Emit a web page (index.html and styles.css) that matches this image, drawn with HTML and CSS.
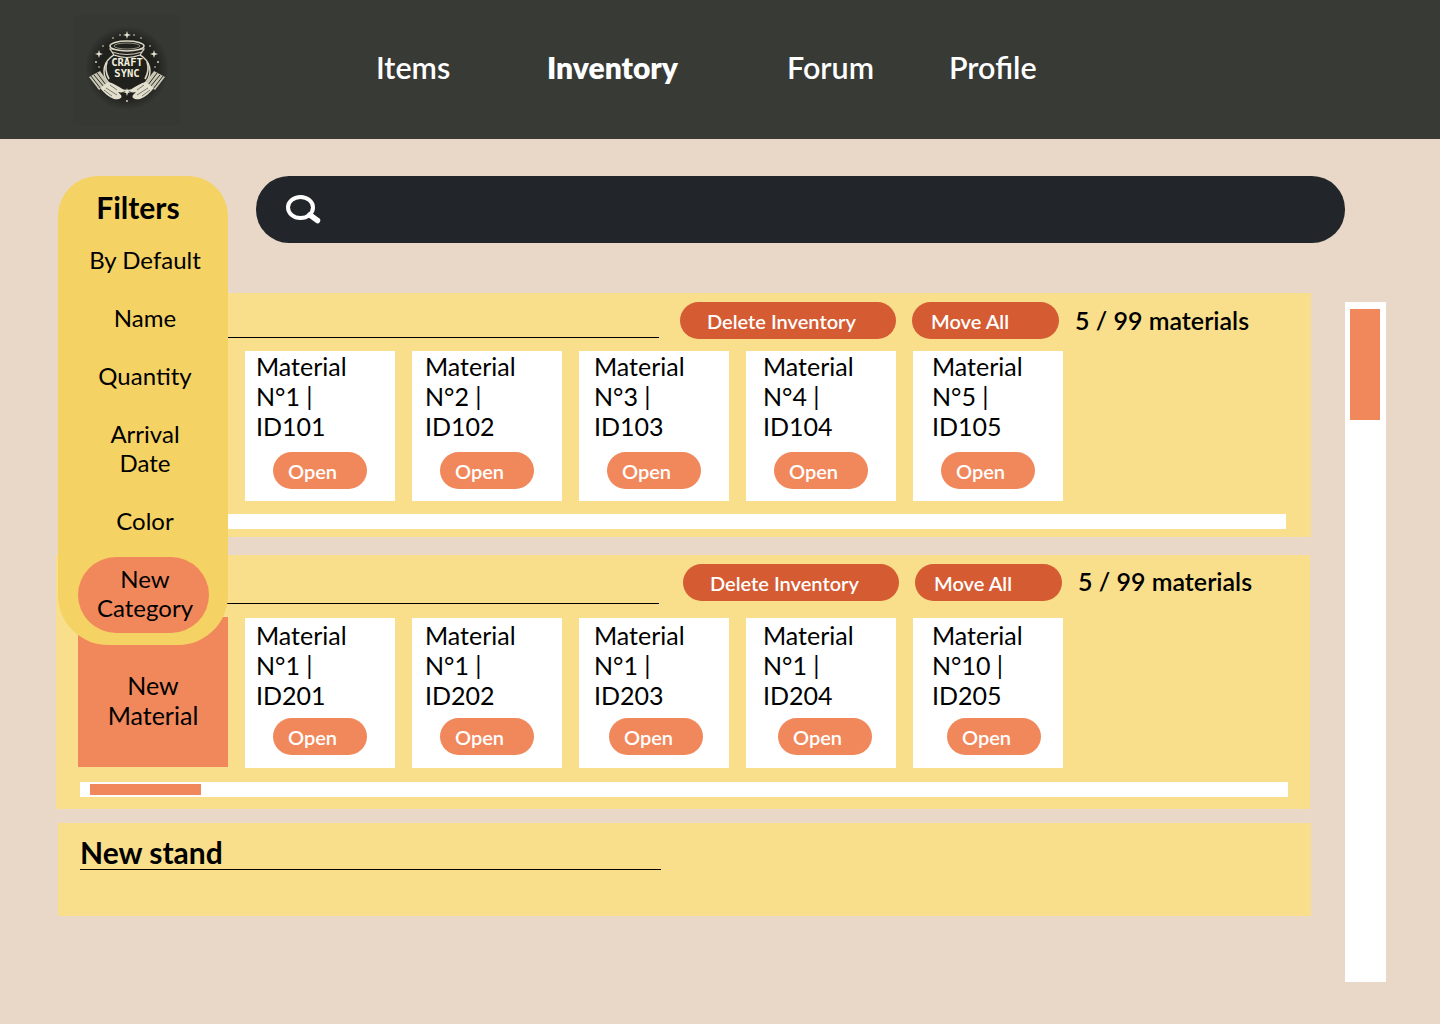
FILE: index.html
```html
<!DOCTYPE html>
<html lang="en">
<head>
<meta charset="utf-8">
<title>Craft Sync - Inventory</title>
<link rel="stylesheet" href="styles.css">
</head>
<body>
<header class="topbar">
  <div class="logo-box">
    <svg class="logo" viewBox="73 15 107 110" aria-label="Craft Sync logo">
      <defs>
        <radialGradient id="halo">
          <stop offset="0.7" stop-color="#20211d"/>
          <stop offset="1" stop-color="#20211d" stop-opacity="0"/>
        </radialGradient>
        <g id="spark"><path d="M0-4 L.9-.9 L4 0 L.9 .9 L0 4 L-.9 .9 L-4 0 L-.9-.9Z"/></g>
        <g id="hand">
          <path d="M89 77 L100 71 L109 83 L99 90Z" fill="#c9c6b4"/>
          <path d="M91 76 L101 89M94 75 L104 87M97 73 L106 85" stroke="#2b2c28" stroke-width="1" fill="none"/>
          <path d="M100 88 L108 82 C113 83 118 86 124 90 C125 92 122 93 118 92 L121 95 C123 98 119 100 114 99 C109 97 104 93 100 88Z" fill="#e2dfcd"/>
          <path d="M106 88 L117 95M104 90 L112 96M110 85 L117 90" stroke="#4a4a43" stroke-width=".7" fill="none"/>
        </g>
      </defs>
      <circle cx="127" cy="68" r="42" fill="url(#halo)"/>
      <g fill="#e6e3d2">
        <use href="#spark" x="127" y="35"/>
        <use href="#spark" x="99" y="54"/>
        <use href="#spark" x="154" y="54"/>
        <circle cx="113" cy="38" r=".8"/><circle cx="120" cy="35" r=".8"/><circle cx="134" cy="35" r=".8"/><circle cx="141" cy="38" r=".8"/>
        <circle cx="103" cy="46" r=".8"/><circle cx="150" cy="46" r=".8"/><circle cx="96" cy="62" r=".9"/><circle cx="158" cy="62" r=".9"/>
        <circle cx="99" cy="67" r=".8"/><circle cx="155" cy="67" r=".8"/><circle cx="127" cy="101" r=".9"/>
      </g>
      <ellipse cx="127" cy="71" rx="23" ry="19.500" fill="#20211d" stroke="#dcd9c7" stroke-width="1.500"/>
      <path d="M110 49 L114 55 Q127 60 140 55 L144 49Z" fill="#20211d" stroke="#dcd9c7" stroke-width="1.200"/>
      <path d="M112 52 Q127 57 142 52" stroke="#dcd9c7" stroke-width=".9" fill="none"/>
      <ellipse cx="127" cy="46" rx="17" ry="5" fill="#20211d" stroke="#dcd9c7" stroke-width="1.600"/>
      <ellipse cx="127" cy="46" rx="13" ry="3" fill="none" stroke="#8f8d7e" stroke-width="1"/>
      <path d="M107 62 Q104 70 109 79M147 62 Q150 70 145 79" stroke="#dcd9c7" stroke-width="1.600" fill="none"/>
      <text class="logo-text" x="127" y="66">CRAFT</text>
      <text class="logo-text" x="127" y="76.500">SYNC</text>
      <use href="#hand"/>
      <use href="#hand" transform="translate(254 0) scale(-1 1)"/>
      <use href="#spark" x="127" y="92" fill="#e6e3d2"/>
    </svg>
  </div>
  <nav class="nav">
    <a class="nav-link">Items</a>
    <a class="nav-link nav-link-active">Inventory</a>
    <a class="nav-link">Forum</a>
    <a class="nav-link">Profile</a>
  </nav>
</header>

<main class="main">
  <div class="content">
    <div class="search">
      <svg class="search-icon" viewBox="0 0 36 36" aria-hidden="true">
        <ellipse cx="15.500" cy="14.500" rx="12.500" ry="10.500" fill="none" stroke="#fff" stroke-width="4"/>
        <path d="M25 22 L32.500 27.500" stroke="#fff" stroke-width="5.500" stroke-linecap="round"/>
      </svg>
    </div>

    <section class="stand stand-first">
      <div class="stand-head">
        <div class="stand-title"></div>
        <button class="action action-delete">Delete Inventory</button>
        <button class="action action-move">Move All</button>
        <span class="count">5 / 99 materials</span>
      </div>
      <div class="row">
        <div class="tile">New<br>Material</div>
        <article class="card"><p class="card-text">Material<br>N°1 |<br>ID101</p><button class="open">Open</button></article>
        <article class="card"><p class="card-text">Material<br>N°2 |<br>ID102</p><button class="open">Open</button></article>
        <article class="card"><p class="card-text">Material<br>N°3 |<br>ID103</p><button class="open">Open</button></article>
        <article class="card"><p class="card-text">Material<br>N°4 |<br>ID104</p><button class="open">Open</button></article>
        <article class="card"><p class="card-text">Material<br>N°5 |<br>ID105</p><button class="open">Open</button></article>
      </div>
      <div class="track"><div class="track-thumb"></div></div>
    </section>

    <section class="stand stand-second">
      <div class="stand-head">
        <div class="stand-title"></div>
        <button class="action action-delete">Delete Inventory</button>
        <button class="action action-move">Move All</button>
        <span class="count">5 / 99 materials</span>
      </div>
      <div class="row">
        <div class="tile">New<br>Material</div>
        <article class="card"><p class="card-text">Material<br>N°1 |<br>ID201</p><button class="open">Open</button></article>
        <article class="card"><p class="card-text">Material<br>N°1 |<br>ID202</p><button class="open">Open</button></article>
        <article class="card"><p class="card-text">Material<br>N°1 |<br>ID203</p><button class="open open-s1">Open</button></article>
        <article class="card"><p class="card-text">Material<br>N°1 |<br>ID204</p><button class="open open-s2">Open</button></article>
        <article class="card"><p class="card-text">Material<br>N°10 |<br>ID205</p><button class="open open-s3">Open</button></article>
      </div>
      <div class="track"><div class="track-thumb"></div></div>
    </section>

    <section class="stand stand-new">
      <h2 class="new-title">New stand</h2>
    </section>
  </div>

  <div class="page-scroll"><div class="page-thumb"></div></div>

  <aside class="filters">
    <h2 class="filters-title">Filters</h2>
    <ul class="filter-list">
      <li>By Default</li>
      <li>Name</li>
      <li>Quantity</li>
      <li>Arrival<br>Date</li>
      <li>Color</li>
    </ul>
    <button class="new-category">New<br>Category</button>
  </aside>
</main>
</body>
</html>
```
FILE: styles.css
```css
* { box-sizing: border-box; }

html, body { margin: 0; }

body {
  height: 1024px;
  overflow: hidden;
  background: #e9d8c7;
  color: #000;
  font-family: Lato, "Liberation Sans", sans-serif;
}

button {
  border: 0;
  font-family: inherit;
  padding: 0;
}

/* top bar */
.topbar {
  height: 139px;
  background: #383a36;
  display: flex;
  align-items: center;
}

.logo-box {
  width: 107px;
  height: 110px;
  margin-left: 73px;
  margin-top: 1px;
  background: #363834;
}

.logo {
  display: block;
  width: 107px;
  height: 110px;
}

.logo-text {
  font-family: "DejaVu Sans Mono", monospace;
  font-size: 10.500px;
  font-weight: 700;
  fill: #f2efde;
  text-anchor: middle;
}

.nav {
  margin-left: 196px;
  margin-top: -5px;
  display: grid;
  grid-template-columns: 171px 240px 162px auto;
}

.nav-link {
  color: #fff;
  font-size: 30.500px;
  font-weight: 600;
  line-height: 36px;
}

.nav-link-active { font-weight: 800; font-size: 30px; }

/* page */
.main {
  position: relative;
  display: grid;
  grid-template-columns: 1345px 41px;
  align-items: start;
}

.content { padding-top: 37px; }

.search {
  height: 67px;
  margin-left: 256px;
  border-radius: 33px;
  background: #22262b;
  display: flex;
  align-items: center;
  padding-left: 29px;
}

.search-icon {
  width: 36px;
  height: 36px;
  margin-top: 2px;
}

/* stands */
.stand {
  background: #f9df8b;
  width: 1253px;
  margin-left: 58px;
}

.stand-first {
  --title-h: 45px;
  --title-left: 22px;
  --action-gap: 21px;
  --row-gap: 12px;
  --card-pad: 0px;
  --open-gap: 11px;
  --track-gap: 13px;
  --track-left: 22px;
  --track-w: 1206px;
  --count-top: 9px;
  height: 244px;
  margin-top: 50px;
}

.stand-second {
  --title-h: 49px;
  --title-left: 24px;
  --action-gap: 24px;
  --row-gap: 14px;
  --card-pad: 2px;
  --open-gap: 8px;
  --track-gap: 14px;
  --track-left: 24px;
  --track-w: 1208px;
  --count-top: 8px;
  height: 254px;
  width: 1254px;
  margin-top: 18px;
  margin-left: 56px;
}

.stand-new {
  height: 93px;
  margin-top: 14px;
  padding: 0 0 0 22px;
}

.stand-head {
  display: flex;
  align-items: flex-start;
}

.stand-title {
  width: 579px;
  height: var(--title-h);
  margin-left: var(--title-left);
  border-bottom: 1px solid #000;
}

.action {
  height: 37px;
  margin-top: 9px;
  border-radius: 19px;
  background: #d55b32;
  color: #fff;
  font-size: 20px;
  font-weight: 600;
  text-align: left;
}

.action-delete {
  width: 216px;
  margin-left: var(--action-gap);
  padding-left: 27px;
}

.action-move {
  width: 147px;
  margin-left: 16px;
  padding-left: 19px;
}

.count {
  margin-left: 16px;
  margin-top: var(--count-top);
  font-size: 25px;
  font-weight: 600;
  line-height: 36px;
  white-space: nowrap;
}

.row {
  display: flex;
  gap: 17px;
  margin-top: var(--row-gap);
  margin-left: 20px;
}

.stand-second .row { margin-left: 22px; }

.tile {
  width: 150px;
  height: 150px;
  margin-top: -1px;
  padding-top: 16px;
  background: #f1885c;
  display: flex;
  align-items: center;
  text-align: center;
  justify-content: center;
  font-size: 25px;
  line-height: 30px;
}

.card {
  width: 150px;
  height: 150px;
  background: #fff;
  padding-top: var(--card-pad);
}

.card-text {
  margin: 0;
  padding-left: 11px;
  font-size: 25px;
  line-height: 30px;
}

.card:nth-child(3) .card-text { padding-left: 13px; }
.card:nth-child(4) .card-text { padding-left: 15px; }
.card:nth-child(5) .card-text { padding-left: 17px; }
.card:nth-child(6) .card-text { padding-left: 19px; }

.open {
  display: block;
  width: 94px;
  height: 37px;
  margin-top: var(--open-gap);
  margin-left: 28px;
  padding-left: 15px;
  border-radius: 19px;
  background: #f1885c;
  color: #fff;
  font-size: 20px;
  font-weight: 600;
  text-align: left;
}

.open-s1 { margin-left: 30px; }
.open-s2 { margin-left: 32px; }
.open-s3 { margin-left: 34px; }

.track {
  width: var(--track-w);
  height: 15px;
  margin-top: var(--track-gap);
  margin-left: var(--track-left);
  padding: 2px 0 2px 10px;
  background: #fff;
}

.track-thumb {
  width: 111px;
  height: 11px;
  background: #f1885c;
}

.new-title {
  width: 581px;
  height: 47px;
  margin: 0;
  border-bottom: 1px solid #000;
  font-size: 30px;
  font-weight: 700;
  line-height: 58px;
  white-space: nowrap;
}

/* page scrollbar */
.page-scroll {
  height: 680px;
  margin-top: 163px;
  padding: 7px 6px 0 5px;
  background: #fff;
}

.page-thumb {
  height: 111px;
  background: #f1885c;
}

/* filters panel */
.filters {
  position: absolute;
  top: 37px;
  left: 58px;
  width: 170px;
  height: 469px;
  padding-top: 13px;
  border-radius: 40px 40px 50px 50px;
  background: #f5d264;
}

.filters-title {
  margin: 0;
  padding-right: 10px;
  font-size: 30px;
  font-weight: 700;
  line-height: 36px;
  text-align: center;
}

.filter-list {
  margin: 0;
  padding: 20px 0 0 4px;
  list-style: none;
  font-size: 24px;
  line-height: 29px;
  text-align: center;
}

.filter-list li + li { margin-top: 29px; }

.new-category {
  display: block;
  width: 131px;
  height: 76px;
  margin: 22px 0 0 20px;
  padding: 0 0 4px 3px;
  border-radius: 38px;
  background: #f1885c;
  color: #000;
  font-size: 24px;
  line-height: 29px;
}
```
